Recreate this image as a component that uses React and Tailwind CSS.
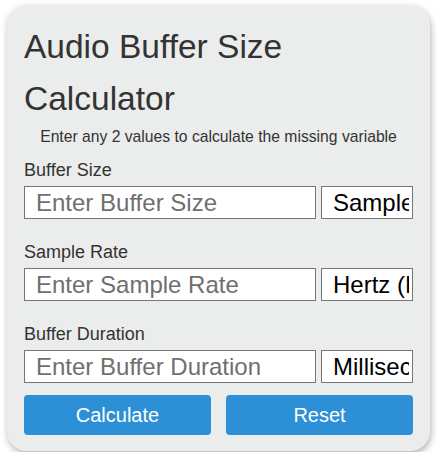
import React, { useState } from "react";

const fields = [
  {
    label: "Buffer Size",
    placeholder: "Enter Buffer Size",
    units: ["Samples", "Kilosamples"],
  },
  {
    label: "Sample Rate",
    placeholder: "Enter Sample Rate",
    units: ["Hertz (Hz)", "Kilohertz (kHz)"],
  },
  {
    label: "Buffer Duration",
    placeholder: "Enter Buffer Duration",
    units: ["Milliseconds", "Seconds"],
  },
];

export default function App() {
  const [values, setValues] = useState(["", "", ""]);

  const setValue = (i) => (e) => {
    const next = [...values];
    next[i] = e.target.value;
    setValues(next);
  };

  return (
    <div className="min-h-screen bg-white pt-[5px] pl-[7px] font-['Liberation_Sans',Arial,sans-serif]">
      <div className="w-[423px] rounded-[20px] bg-[#ebecec] px-[17px] pt-[16px] pb-[16px] shadow-[1px_3px_7px_rgba(0,0,0,0.3)]">
        <h1 className="text-[33.5px] leading-[52px] text-[#333333] font-normal">
          Audio Buffer Size Calculator
        </h1>
        <p className="mt-[2px] text-center text-[15.7px] leading-[20px] text-[#333333]">
          Enter any 2 values to calculate the missing variable
        </p>

        <div className="flex flex-col gap-[22px] mt-[12px]">
          {fields.map((f, i) => (
            <div key={f.label}>
              <label className="block text-[18px] leading-[22px] text-[#333333] mb-[5px]">
                {f.label}
              </label>
              <div className="flex gap-[5px]">
                <input
                  type="text"
                  value={values[i]}
                  onChange={setValue(i)}
                  placeholder={f.placeholder}
                  className="w-[292px] h-[33px] border border-[#767676] bg-white px-[11px] text-[24px] text-black placeholder:text-[#6f6f6f] outline-none"
                />
                <select className="w-[92px] h-[33px] appearance-none border border-[#767676] bg-white pl-[11px] pr-[3px] py-0 text-[24px] leading-[28px] text-black outline-none">
                  {f.units.map((u) => (
                    <option key={u}>{u}</option>
                  ))}
                </select>
              </div>
            </div>
          ))}
        </div>

        <div className="flex gap-[15px] mt-[12px]">
          <button className="w-[187px] h-[40px] rounded-[4px] bg-[#2d90d6] text-white text-[20px]">
            Calculate
          </button>
          <button
            className="w-[187px] h-[40px] rounded-[4px] bg-[#2d90d6] text-white text-[20px]"
            onClick={() => setValues(["", "", ""])}
          >
            Reset
          </button>
        </div>
      </div>
    </div>
  );
}
